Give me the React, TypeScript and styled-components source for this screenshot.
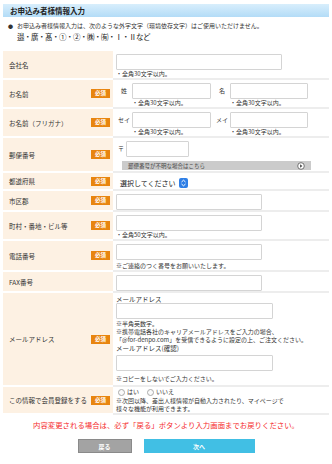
import React from 'react';
import styled, { createGlobalStyle } from 'styled-components';

const GlobalStyle = createGlobalStyle`
  body {
    margin: 0;
    background: #fff;
    color: #333;
    font-family: "Noto Sans CJK JP", "Noto Sans", sans-serif;
  }
`;

const Required = () => <Badge>必須</Badge>;

const App: React.FC = () => {
  return (
    <Page>
      <GlobalStyle />
      <TitleBar>お申込み者様情報入力</TitleBar>
      <Notice>
        <NoticeLine>
          <Bullet>●</Bullet>お申込み者様情報入力は、次のような外字文字（環境依存文字）はご使用いただけません。
        </NoticeLine>
        <GaijiLine>邉・廣・髙・①・②・㈱・㈲・Ⅰ・Ⅱなど</GaijiLine>
      </Notice>

      <Form>
        <Row>
          <Label>会社名</Label>
          <Cell>
            <Input $w={166} />
            <NoteText>・全角30文字以内。</NoteText>
          </Cell>
        </Row>

        <Row>
          <Label>
            お名前
            <Required />
          </Label>
          <Cell>
            <Pair>
              <PairGroup>
                <SubLabel>姓</SubLabel>
                <div>
                  <Input $w={79} />
                  <NoteText>・全角30文字以内。</NoteText>
                </div>
              </PairGroup>
              <PairGroup>
                <SubLabel>名</SubLabel>
                <div>
                  <Input $w={78} />
                  <NoteText>・全角30文字以内。</NoteText>
                </div>
              </PairGroup>
            </Pair>
          </Cell>
        </Row>

        <Row>
          <Label>
            お名前（フリガナ）
            <Required />
          </Label>
          <Cell>
            <Pair>
              <PairGroup>
                <SubLabel>セイ</SubLabel>
                <div>
                  <Input $w={79} />
                  <NoteText>・全角30文字以内。</NoteText>
                </div>
              </PairGroup>
              <PairGroup>
                <SubLabel>メイ</SubLabel>
                <div>
                  <Input $w={78} />
                  <NoteText>・全角30文字以内。</NoteText>
                </div>
              </PairGroup>
            </Pair>
          </Cell>
        </Row>

        <Row>
          <Label>
            郵便番号
            <Required />
          </Label>
          <Cell>
            <ZipLine>
              <ZipMark>〒</ZipMark>
              <Input $w={63} />
            </ZipLine>
            <ZipHelp>
              郵便番号が不明な場合はこちら
              <svg width="8" height="8" viewBox="0 0 8 8">
                <circle cx="4" cy="4" r="3.3" fill="#fff" stroke="#555" strokeWidth="0.8" />
                <path d="M3.1 2.3 L5.4 4 L3.1 5.7 Z" fill="#444" />
              </svg>
            </ZipHelp>
          </Cell>
        </Row>

        <Row>
          <Label>
            都道府県
            <Required />
          </Label>
          <Cell>
            <Select>
              選択してください
              <Spinner>
                <svg width="9" height="10" viewBox="0 0 9 10">
                  <path d="M2.5 4 L4.5 2.2 L6.5 4 M2.5 6 L4.5 7.8 L6.5 6" fill="none" stroke="#fff" strokeWidth="1" />
                </svg>
              </Spinner>
            </Select>
          </Cell>
        </Row>

        <Row>
          <Label>
            市区郡
            <Required />
          </Label>
          <Cell>
            <Input $w={146} />
          </Cell>
        </Row>

        <Row>
          <Label>
            町村・番地・ビル等
            <Required />
          </Label>
          <Cell>
            <Input $w={146} />
            <NoteText>・全角50文字以内。</NoteText>
          </Cell>
        </Row>

        <Row>
          <Label>
            電話番号
            <Required />
          </Label>
          <Cell>
            <Input $w={146} />
            <NoteText $mt={2}>※ご連絡のつく番号をお願いいたします。</NoteText>
          </Cell>
        </Row>

        <Row>
          <Label>FAX番号</Label>
          <Cell>
            <Input $w={146} />
          </Cell>
        </Row>

        <Row>
          <Label>
            メールアドレス
            <Required />
          </Label>
          <Cell $top={2} $bottom={2}>
            <FieldTitle>メールアドレス</FieldTitle>
            <Input $w={157} />
            <NoteText $mt={1}>※半角英数字。</NoteText>
            <NoteText>※携帯電話各社のキャリアメールアドレスをご入力の場合、</NoteText>
            <NoteText>「@for-denpo.com」を受信できるように設定の上、ご注文ください。</NoteText>
            <FieldTitle>メールアドレス(確認)</FieldTitle>
            <Input $w={157} $mt={3} />
            <NoteText $mt={4}>※コピーをしないでご入力ください。</NoteText>
          </Cell>
        </Row>

        <Row>
          <Label>
            この情報で会員登録をする
            <Required />
          </Label>
          <Cell $top={1} $bottom={0}>
            <Radios>
              <Radio>
                <RadioDot />
                はい
              </Radio>
              <Radio>
                <RadioDot />
                いいえ
              </Radio>
            </Radios>
            <NoteText $mt={1}>※次回以降、差出人様情報が自動入力されたり、マイページで</NoteText>
            <NoteText>様々な機能が利用できます。</NoteText>
          </Cell>
        </Row>
      </Form>

      <Warning>内容変更される場合は、必ず「戻る」ボタンより入力画面までお戻りください。</Warning>

      <Buttons>
        <BackButton>戻る</BackButton>
        <NextButton>次へ</NextButton>
      </Buttons>
    </Page>
  );
};

const Page = styled.div`
  padding: 4px 3px 0;
  width: 332px;
  box-sizing: border-box;
  font-size: 6px;
  line-height: 8px;
`;

const TitleBar = styled.div`
  height: 13px;
  line-height: 13px;
  padding-left: 7px;
  font-size: 7.5px;
  font-weight: bold;
  color: #222;
  background: linear-gradient(#d8eefc, #b3dcf7);
`;

const Notice = styled.div`
  padding: 4px 0 0 5px;
`;

const NoticeLine = styled.div`
  font-size: 6px;
  line-height: 9px;
  white-space: nowrap;
`;

const Bullet = styled.span`
  font-size: 5px;
  margin-right: 4px;
`;

const GaijiLine = styled.div`
  font-size: 7.5px;
  line-height: 13px;
  padding-left: 9px;
  letter-spacing: -0.5px;
  color: #222;
`;

const Form = styled.div`
  margin-top: 8px;
`;

const Row = styled.div`
  display: grid;
  grid-template-columns: 110px 1fr;
`;

const Label = styled.div`
  display: flex;
  align-items: center;
  justify-content: space-between;
  padding: 0 3px 0 6px;
  background: #fdf1e3;
  border-bottom: 2px solid #fff;
  font-size: 6.5px;
  color: #333;
`;

const Badge = styled.span`
  display: inline-block;
  width: 19px;
  height: 9px;
  line-height: 9px;
  text-align: center;
  background: #e8850f;
  color: #fff;
  font-size: 5.5px;
  font-weight: bold;
`;

const Cell = styled.div<{ $top?: number; $bottom?: number }>`
  padding: ${(p) => p.$top ?? 3}px 3px ${(p) => p.$bottom ?? 0}px;
  border-bottom: 2px solid #ededed;
  font-size: 6px;
  line-height: 8px;
`;

const Input = styled.input<{ $w: number; $mt?: number }>`
  display: block;
  width: ${(p) => p.$w}px;
  height: 16px;
  box-sizing: border-box;
  margin: ${(p) => p.$mt ?? 0}px 0 0;
  border: 1px solid #d4d4d4;
  border-radius: 1px;
  background: #fff;
  padding: 0 3px;
`;

const NoteText = styled.div<{ $mt?: number }>`
  margin-top: ${(p) => p.$mt ?? 0}px;
  font-size: 6px;
  line-height: 8px;
  white-space: nowrap;
  color: #333;
`;

const Pair = styled.div`
  display: flex;
  gap: 3px;
`;

const PairGroup = styled.div`
  display: flex;
  align-items: flex-start;
`;

const SubLabel = styled.span`
  width: 16px;
  line-height: 16px;
  text-align: center;
  font-size: 6px;
`;

const ZipLine = styled.div`
  display: flex;
  align-items: center;
`;

const ZipMark = styled.span`
  width: 8px;
  font-size: 6px;
  padding-left: 2px;
`;

const ZipHelp = styled.div`
  display: flex;
  align-items: center;
  justify-content: space-between;
  width: 189px;
  height: 9px;
  margin: 4px 0 1px 6px;
  padding: 0 6px;
  box-sizing: border-box;
  background: #cbcbcb;
  font-size: 5.5px;
  color: #444;
`;

const Select = styled.div`
  display: flex;
  align-items: center;
  gap: 3px;
  height: 13px;
  padding-left: 4px;
  font-size: 7px;
  color: #222;
`;

const Spinner = styled.span`
  display: inline-flex;
  align-items: center;
  justify-content: center;
  width: 9px;
  height: 10px;
  border-radius: 2px;
  background: #2f7fe6;
`;

const FieldTitle = styled.div<{ $mt?: number }>`
  margin-top: ${(p) => p.$mt ?? 0}px;
  font-size: 6.5px;
  line-height: 8px;
  color: #333;
`;

const Radios = styled.div`
  display: flex;
  gap: 8px;
  padding-left: 2px;
`;

const Radio = styled.label`
  display: flex;
  align-items: center;
  gap: 2px;
  font-size: 6px;
  line-height: 8px;
`;

const RadioDot = styled.span`
  width: 5px;
  height: 5px;
  border-radius: 50%;
  border: 1px solid #aaa;
  background: #fafafa;
`;

const Warning = styled.div`
  margin-top: 5px;
  text-align: center;
  color: #f52b2b;
  font-size: 7.4px;
  line-height: 10px;
`;

const Buttons = styled.div`
  display: flex;
  justify-content: center;
  gap: 12px;
  margin-top: 9px;
`;

const BackButton = styled.button`
  width: 54px;
  height: 14px;
  padding: 0;
  border: 1px solid #8a8a8a;
  background: #a3a3a3;
  color: #fff;
  font-family: inherit;
  font-size: 6px;
  font-weight: bold;
`;

const NextButton = styled.button`
  width: 111px;
  height: 14px;
  padding: 0;
  border: none;
  background: #41bfe4;
  color: #fff;
  font-family: inherit;
  font-size: 6px;
  font-weight: bold;
`;

export default App;
